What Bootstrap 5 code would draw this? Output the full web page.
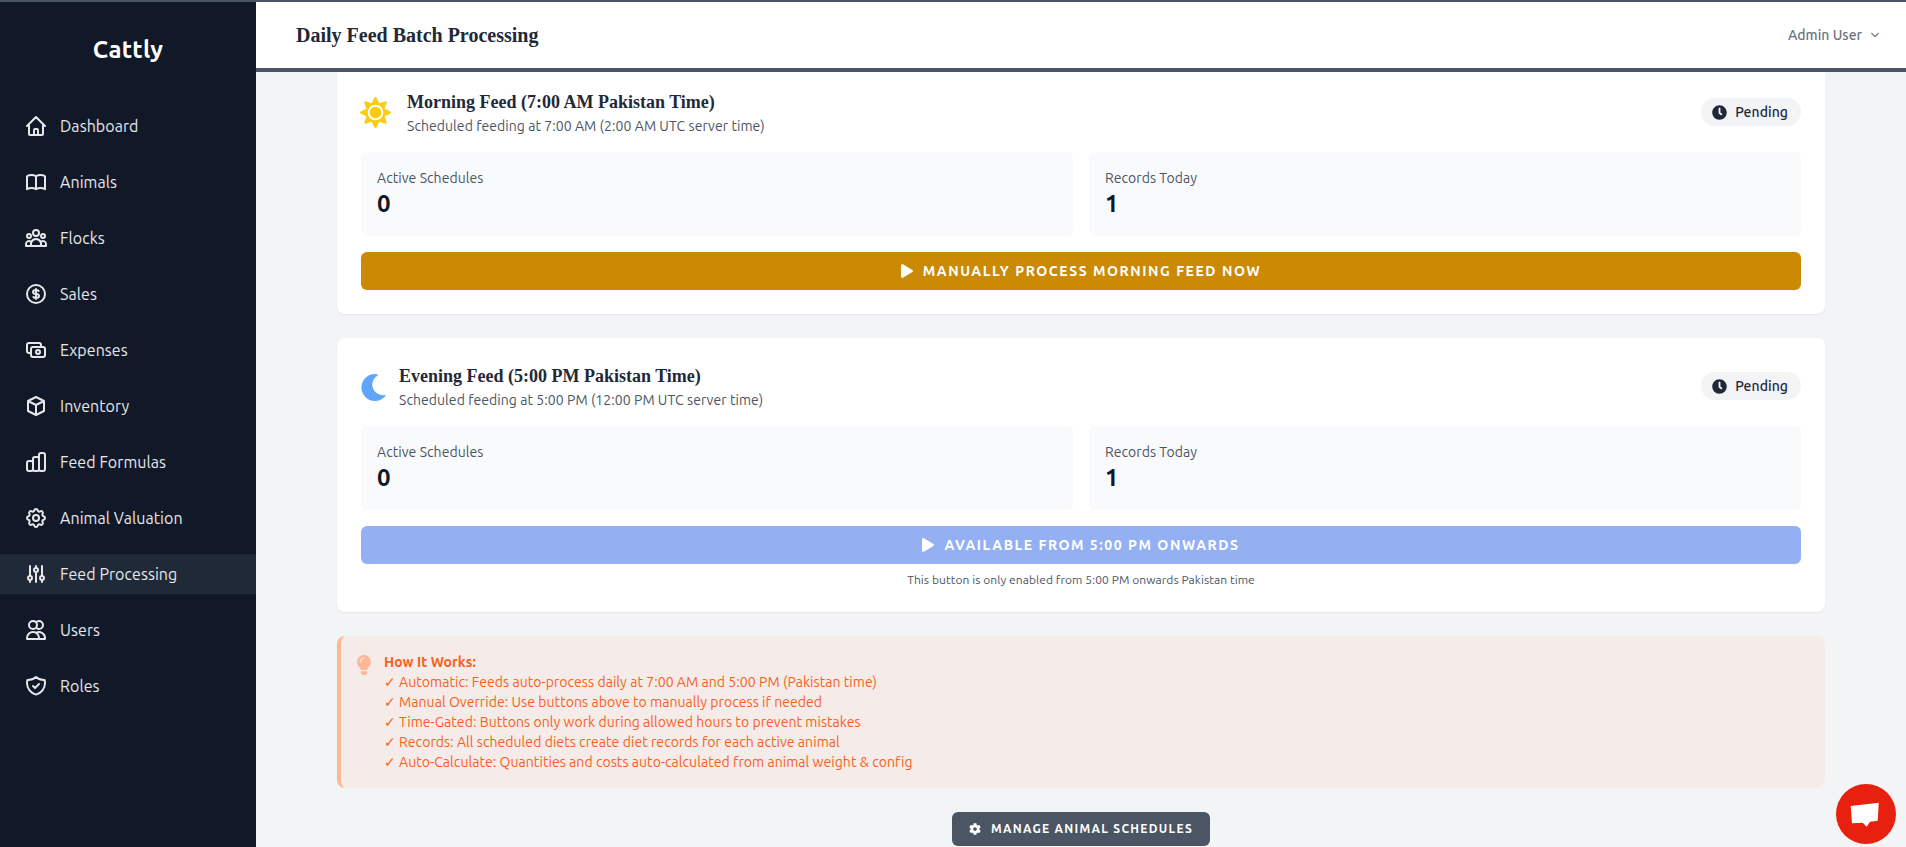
<!DOCTYPE html>
<html lang="en">
<head>
<meta charset="utf-8">
<title>Daily Feed Batch Processing</title>
<link href="https://cdn.jsdelivr.net/npm/bootstrap@5.3.0/dist/css/bootstrap.min.css" rel="stylesheet">
<style>
html,body{height:100%;overflow:hidden}
body{font-family:Ubuntu,"Noto Sans",sans-serif;background:#f3f4f6;color:#1f2937;letter-spacing:.06px}
.app-shell{height:847px;border-top:2px solid #4b5563}
.side-pane{width:256px;background:#111827;flex-shrink:0}
.side-brand{height:96px;font-size:24px;font-weight:700;color:#fff;padding-top:30px;line-height:36px;letter-spacing:.25px}
.side-nav{padding-top:8px}
.side-link{display:flex;align-items:center;gap:12px;height:40px;margin-bottom:16px;padding-left:24px;color:#e5e7eb;font-size:16px;text-decoration:none}
.side-link.on{background:#1f2937}
.ico24{width:24px;height:24px;fill:none;stroke:currentColor;stroke-width:2;stroke-linecap:round;stroke-linejoin:round;flex-shrink:0}
.top-head{height:70px;border-bottom:4px solid #4b5563;background:#fff;padding:0 26px 0 40px;flex-shrink:0}
.top-title{font-family:"Liberation Serif",serif;font-size:20px;font-weight:700;color:#1f2937;margin:0;letter-spacing:0}
.top-user{font-size:14px;font-weight:500;color:#6b7280;letter-spacing:0}
.main-scroll{overflow:hidden;padding:0 81px}
.feed-panel{background:#fff;border-radius:8px;box-shadow:0 1px 2px rgba(0,0,0,.06);padding:24px;margin-bottom:24px}
.feed-panel.cut{border-radius:0 0 8px 8px;padding-top:16px}
.feed-title{font-family:"Liberation Serif",serif;font-size:18px;font-weight:700;color:#1f2937;line-height:28px;margin:0;letter-spacing:0}
.feed-sub{font-size:14px;color:#4b5563;line-height:20px;margin:0}
.sun-ico{width:31px;height:31px;fill:#facc15;margin-left:-1px;flex-shrink:0}
.moon-ico{width:27px;height:27px;fill:#60a5fa;margin-left:-1px;margin-right:-3px;flex-shrink:0;margin-top:3px}
.gap-moon{gap:15px}
.state-pill{height:28px;border-radius:14px;background:#f3f4f6;font-size:14px;font-weight:500;padding:0 13px 0 11px;color:#1f2937;gap:8px;margin-top:10px}
.state-pill svg{width:15px;height:15px;fill:#1f2937}
.stat-tile{background:#f9fafb;border-radius:6px;padding:12px 16px;height:84px}
.stat-label{font-size:14px;color:#4b5563;line-height:20px;margin-top:4px}
.stat-num{font-size:24px;font-weight:700;color:#111827;line-height:32px}
.wide-btn{height:38px;border:0;border-radius:6px;color:#fff;font-size:14px;font-weight:700;letter-spacing:1.55px;text-transform:uppercase;gap:10px;width:100%}
.wide-btn svg{width:12px;height:14px;fill:#fff}
.btn-gold{background:#ca8a04}
.btn-blue{background:#93b0f3}
.note-line{font-size:12px;color:#4b5563;line-height:16px;margin-top:8px}
.tip-box{background:#f5ebe8;border-left:4px solid #fdb795;border-radius:8px;padding:16px;gap:13px;height:152px;margin-bottom:24px;color:#f95f20;font-size:14px;line-height:20px}
.tip-box svg{width:14px;height:20px;fill:#fdb795;flex-shrink:0;margin-top:3px}
.tip-head{font-weight:700}
.tick-mark{font-family:"DejaVu Sans",sans-serif}
.manage-btn{height:34px;width:258px;background:#4b5563;border:0;border-radius:6px;color:#fff;font-size:12px;font-weight:700;letter-spacing:1.3px;text-transform:uppercase;gap:10px}
.manage-btn svg{width:12px;height:12px;fill:#fff}
.chat-fab{position:absolute;right:10px;bottom:3px;width:60px;height:60px;border-radius:50%;background:#e8200f}
.chat-fab svg{width:60px;height:60px;display:block}
</style>
</head>
<body>
<div class="app-shell d-flex position-relative">
  <aside class="side-pane">
    <div class="side-brand text-center">Cattly</div>
    <nav class="side-nav">
      <a class="side-link" href="#"><svg class="ico24" viewBox="0 0 24 24"><path d="M3 12l2-2m0 0l7-7 7 7M5 10v10a1 1 0 001 1h3m10-11l2 2m-2-2v10a1 1 0 01-1 1h-3m-6 0a1 1 0 001-1v-4a1 1 0 011-1h2a1 1 0 011 1v4a1 1 0 001 1m-6 0h6"/></svg>Dashboard</a>
      <a class="side-link" href="#"><svg class="ico24" viewBox="0 0 24 24"><path d="M12 6.253v13m0-13C10.832 5.477 9.246 5 7.500 5S4.168 5.477 3 6.253v13C4.168 18.477 5.754 18 7.500 18s3.332.477 4.500 1.253m0-13C13.168 5.477 14.754 5 16.500 5c1.747 0 3.332.477 4.500 1.253v13C19.832 18.477 18.247 18 16.500 18c-1.746 0-3.332.477-4.500 1.253"/></svg>Animals</a>
      <a class="side-link" href="#"><svg class="ico24" viewBox="0 0 24 24"><path d="M17 20h5v-2a3 3 0 00-5.356-1.857M17 20H7m10 0v-2c0-.656-.126-1.283-.356-1.857M7 20H2v-2a3 3 0 015.356-1.857M7 20v-2c0-.656.126-1.283.356-1.857m0 0a5.002 5.002 0 019.288 0M15 7a3 3 0 11-6 0 3 3 0 016 0zm6 3a2 2 0 11-4 0 2 2 0 014 0zM7 10a2 2 0 11-4 0 2 2 0 014 0z"/></svg>Flocks</a>
      <a class="side-link" href="#"><svg class="ico24" viewBox="0 0 24 24"><path d="M12 8c-1.657 0-3 .895-3 2s1.343 2 3 2 3 .895 3 2-1.343 2-3 2m0-8c1.110 0 2.080.402 2.599 1M12 8V7m0 1v8m0 0v1m0-1c-1.110 0-2.080-.402-2.599-1M21 12a9 9 0 11-18 0 9 9 0 0118 0z"/></svg>Sales</a>
      <a class="side-link" href="#"><svg class="ico24" viewBox="0 0 24 24"><path d="M17 9V7a2 2 0 00-2-2H5a2 2 0 00-2 2v6a2 2 0 002 2h2m2 4h10a2 2 0 002-2v-6a2 2 0 00-2-2H9a2 2 0 00-2 2v6a2 2 0 002 2zm7-5a2 2 0 11-4 0 2 2 0 014 0z"/></svg>Expenses</a>
      <a class="side-link" href="#"><svg class="ico24" viewBox="0 0 24 24"><path d="M20 7l-8-4-8 4m16 0l-8 4m8-4v10l-8 4m0-10L4 7m8 4v10M4 7v10l8 4"/></svg>Inventory</a>
      <a class="side-link" href="#"><svg class="ico24" viewBox="0 0 24 24"><path d="M9 19v-6a2 2 0 00-2-2H5a2 2 0 00-2 2v6a2 2 0 002 2h2a2 2 0 002-2zm0 0V9a2 2 0 012-2h2a2 2 0 012 2v10m-6 0a2 2 0 002 2h2a2 2 0 002-2m0 0V5a2 2 0 012-2h2a2 2 0 012 2v14a2 2 0 01-2 2h-2a2 2 0 01-2-2z"/></svg>Feed Formulas</a>
      <a class="side-link" href="#"><svg class="ico24" viewBox="0 0 24 24"><path d="M10.325 4.317c.426-1.756 2.924-1.756 3.350 0a1.724 1.724 0 002.573 1.066c1.543-.94 3.310.826 2.370 2.370a1.724 1.724 0 001.065 2.572c1.756.426 1.756 2.924 0 3.350a1.724 1.724 0 00-1.066 2.573c.94 1.543-.826 3.310-2.370 2.370a1.724 1.724 0 00-2.572 1.065c-.426 1.756-2.924 1.756-3.350 0a1.724 1.724 0 00-2.573-1.066c-1.543.94-3.310-.826-2.370-2.370a1.724 1.724 0 00-1.065-2.572c-1.756-.426-1.756-2.924 0-3.350a1.724 1.724 0 001.066-2.573c-.94-1.543.826-3.310 2.370-2.370.996.608 2.296.07 2.572-1.065z"/><path d="M15 12a3 3 0 11-6 0 3 3 0 016 0z"/></svg>Animal Valuation</a>
      <a class="side-link on" href="#"><svg class="ico24" viewBox="0 0 24 24"><path d="M12 6V4m0 2a2 2 0 100 4m0-4a2 2 0 110 4m-6 8a2 2 0 100-4m0 4a2 2 0 110-4m0 4v2m0-6V4m6 6v10m6-2a2 2 0 100-4m0 4a2 2 0 110-4m0 4v2m0-6V4"/></svg>Feed Processing</a>
      <a class="side-link" href="#"><svg class="ico24" viewBox="0 0 24 24"><path d="M12 4.354a4 4 0 110 5.292M15 21H3v-1a6 6 0 0112 0v1zm0 0h6v-1a6 6 0 00-9-5.197M13 7a4 4 0 11-8 0 4 4 0 018 0z"/></svg>Users</a>
      <a class="side-link" href="#"><svg class="ico24" viewBox="0 0 24 24"><path d="M9 12l2 2 4-4m5.618-4.016A11.955 11.955 0 0112 2.944a11.955 11.955 0 01-8.618 3.040A12.020 12.020 0 003 9c0 5.591 3.824 10.290 9 11.622 5.176-1.332 9-6.030 9-11.622 0-1.042-.133-2.052-.382-3.016z"/></svg>Roles</a>
    </nav>
  </aside>
  <div class="flex-grow-1 d-flex flex-column" style="min-width:0">
    <header class="top-head d-flex align-items-center justify-content-between">
      <h1 class="top-title">Daily Feed Batch Processing</h1>
      <div class="top-user d-flex align-items-center gap-2">Admin User <svg width="10" height="10" viewBox="0 0 24 24" fill="none" stroke="#6b7280" stroke-width="3" stroke-linecap="round" stroke-linejoin="round"><path d="M4 8l8 8 8-8"/></svg></div>
    </header>
    <main class="main-scroll flex-grow-1">
      <section class="feed-panel cut">
        <div class="d-flex justify-content-between align-items-start">
          <div class="d-flex align-items-center gap-3">
            <svg class="sun-ico" viewBox="0 0 512 512"><path d="M256 160c-52.900 0-96 43.100-96 96s43.100 96 96 96 96-43.100 96-96-43.100-96-96-96zm246.400 80.500l-94.700-47.300 33.500-100.400c4.500-13.600-8.400-26.500-21.900-21.900l-100.400 33.500-47.400-94.800c-6.400-12.800-24.600-12.800-31 0l-47.300 94.700L92.700 70.800c-13.600-4.500-26.500 8.400-21.900 21.900l33.500 100.400-94.700 47.400c-12.800 6.400-12.800 24.600 0 31l94.700 47.300-33.500 100.500c-4.500 13.600 8.400 26.500 21.900 21.900l100.400-33.500 47.300 94.700c6.400 12.800 24.600 12.800 31 0l47.300-94.700 100.400 33.500c13.600 4.500 26.500-8.400 21.900-21.900l-33.500-100.400 94.700-47.300c13-6.500 13-24.700.2-31.100zm-155.900 106c-49.900 49.900-131.100 49.900-181 0-49.900-49.900-49.900-131.100 0-181 49.900-49.900 131.100-49.900 181 0 49.900 49.900 49.900 131.100 0 181z"/></svg>
            <div><h2 class="feed-title">Morning Feed (7:00 AM Pakistan Time)</h2><p class="feed-sub">Scheduled feeding at 7:00 AM (2:00 AM UTC server time)</p></div>
          </div>
          <div class="state-pill d-flex align-items-center"><svg viewBox="0 0 512 512"><path d="M256,8C119,8,8,119,8,256S119,504,256,504,504,393,504,256,393,8,256,8Zm92.490,313h0l-20,25a16,16,0,0,1-22.490,2.500h0l-67-49.720a40,40,0,0,1-15-31.230V112a16,16,0,0,1,16-16h32a16,16,0,0,1,16,16V256l58,42.500A16,16,0,0,1,348.490,321Z"/></svg>Pending</div>
        </div>
        <div class="row g-3 mt-0">
          <div class="col-6 mt-3"><div class="stat-tile"><div class="stat-label">Active Schedules</div><div class="stat-num">0</div></div></div>
          <div class="col-6 mt-3"><div class="stat-tile"><div class="stat-label">Records Today</div><div class="stat-num">1</div></div></div>
        </div>
        <button class="wide-btn btn-gold d-flex align-items-center justify-content-center mt-3"><svg viewBox="0 0 448 512"><path d="M424.400 214.700L72.400 6.600C43.800-10.300 0 6.100 0 47.900V464c0 37.500 40.700 60.100 72.400 41.300l352-208c31.400-18.500 31.500-64.100 0-82.600z"/></svg>Manually Process Morning Feed Now</button>
      </section>
      <section class="feed-panel">
        <div class="d-flex justify-content-between align-items-start">
          <div class="d-flex align-items-center gap-moon">
            <svg class="moon-ico" viewBox="0 0 512 512"><path d="M283.211 512c78.962 0 151.079-35.925 198.857-94.792 7.068-8.708-.639-21.430-11.562-19.350-124.203 23.654-238.262-71.576-238.262-196.954 0-72.222 38.662-138.635 101.498-174.394 9.686-5.512 7.250-20.197-3.756-22.230A258.156 258.156 0 0 0 283.211 0c-141.309 0-256 114.511-256 256 0 141.309 114.511 256 256 256z"/></svg>
            <div><h2 class="feed-title">Evening Feed (5:00 PM Pakistan Time)</h2><p class="feed-sub">Scheduled feeding at 5:00 PM (12:00 PM UTC server time)</p></div>
          </div>
          <div class="state-pill d-flex align-items-center"><svg viewBox="0 0 512 512"><path d="M256,8C119,8,8,119,8,256S119,504,256,504,504,393,504,256,393,8,256,8Zm92.490,313h0l-20,25a16,16,0,0,1-22.490,2.500h0l-67-49.720a40,40,0,0,1-15-31.230V112a16,16,0,0,1,16-16h32a16,16,0,0,1,16,16V256l58,42.500A16,16,0,0,1,348.490,321Z"/></svg>Pending</div>
        </div>
        <div class="row g-3 mt-0">
          <div class="col-6 mt-3"><div class="stat-tile"><div class="stat-label">Active Schedules</div><div class="stat-num">0</div></div></div>
          <div class="col-6 mt-3"><div class="stat-tile"><div class="stat-label">Records Today</div><div class="stat-num">1</div></div></div>
        </div>
        <button class="wide-btn btn-blue d-flex align-items-center justify-content-center mt-3"><svg viewBox="0 0 448 512"><path d="M424.400 214.700L72.400 6.600C43.800-10.300 0 6.100 0 47.900V464c0 37.500 40.700 60.100 72.400 41.300l352-208c31.400-18.500 31.500-64.100 0-82.600z"/></svg>Available from 5:00 PM onwards</button>
        <p class="note-line text-center mb-0">This button is only enabled from 5:00 PM onwards Pakistan time</p>
      </section>
      <section class="tip-box d-flex">
        <svg viewBox="0 0 352 512"><path d="M96.060 454.350c.01 6.290 1.870 12.450 5.360 17.690l17.090 25.690a31.990 31.990 0 0 0 26.640 14.280h61.710a31.990 31.990 0 0 0 26.640-14.280l17.090-25.690a31.989 31.989 0 0 0 5.360-17.690l.04-38.350H96.010l.05 38.350zM0 176c0 44.370 16.450 84.850 43.560 115.780 16.520 18.850 42.360 58.230 52.210 91.450.04.26.07.52.11.78h160.240c.04-.26.07-.51.11-.78 9.850-33.220 35.690-72.600 52.210-91.450C335.550 260.850 352 220.370 352 176 352 78.610 272.910-.3 175.450 0 73.440.31 0 82.970 0 176zm176-80c-44.110 0-80 35.890-80 80 0 8.840-7.160 16-16 16s-16-7.160-16-16c0-61.760 50.240-112 112-112 8.840 0 16 7.160 16 16s-7.160 16-16 16z"/></svg>
        <div>
          <div class="tip-head">How It Works:</div>
          <div><span class="tick-mark">✓</span> Automatic: Feeds auto-process daily at 7:00 AM and 5:00 PM (Pakistan time)</div>
          <div><span class="tick-mark">✓</span> Manual Override: Use buttons above to manually process if needed</div>
          <div><span class="tick-mark">✓</span> Time-Gated: Buttons only work during allowed hours to prevent mistakes</div>
          <div><span class="tick-mark">✓</span> Records: All scheduled diets create diet records for each active animal</div>
          <div><span class="tick-mark">✓</span> Auto-Calculate: Quantities and costs auto-calculated from animal weight &amp; config</div>
        </div>
      </section>
      <div class="d-flex justify-content-center">
        <button class="manage-btn d-flex align-items-center justify-content-center"><svg viewBox="0 0 512 512"><path d="M487.400 315.700l-42.600-24.600c4.300-23.200 4.300-47 0-70.200l42.600-24.600c4.900-2.800 7.100-8.600 5.500-14-11.100-35.600-30-67.800-54.700-94.600-3.800-4.100-10-5.100-14.800-2.300L380.800 110c-17.900-15.400-38.500-27.300-60.800-35.100V25.800c0-5.600-3.900-10.500-9.400-11.700-36.700-8.200-74.300-7.800-109.200 0-5.500 1.200-9.400 6.100-9.400 11.700V75c-22.200 7.900-42.800 19.800-60.800 35.100L88.700 85.500c-4.900-2.800-11-1.900-14.800 2.300-24.700 26.700-43.600 58.900-54.700 94.600-1.700 5.400.6 11.200 5.500 14L67.300 221c-4.300 23.200-4.300 47 0 70.200l-42.600 24.600c-4.900 2.800-7.100 8.600-5.500 14 11.100 35.600 30 67.800 54.700 94.600 3.800 4.100 10 5.100 14.800 2.300l42.600-24.600c17.900 15.400 38.500 27.300 60.800 35.100v49.200c0 5.600 3.900 10.500 9.400 11.700 36.700 8.200 74.300 7.800 109.200 0 5.500-1.200 9.400-6.100 9.400-11.700v-49.200c22.200-7.900 42.800-19.800 60.800-35.100l42.600 24.600c4.900 2.800 11 1.900 14.800-2.300 24.700-26.700 43.600-58.900 54.700-94.600 1.500-5.500-.7-11.300-5.600-14.100zM256 336c-44.100 0-80-35.900-80-80s35.900-80 80-80 80 35.900 80 80-35.900 80-80 80z"/></svg>Manage Animal Schedules</button>
      </div>
    </main>
  </div>
  <div class="chat-fab"><svg viewBox="0 0 60 60"><path d="M14.700 22L42.700 18.700 41.700 36.700 34 37.700 30.700 42.700 26.700 38.700 16 39.300z" fill="#fff"/></svg></div>
</div>
<script src="https://cdn.jsdelivr.net/npm/bootstrap@5.3.0/dist/js/bootstrap.bundle.min.js"></script>
</body>
</html>
